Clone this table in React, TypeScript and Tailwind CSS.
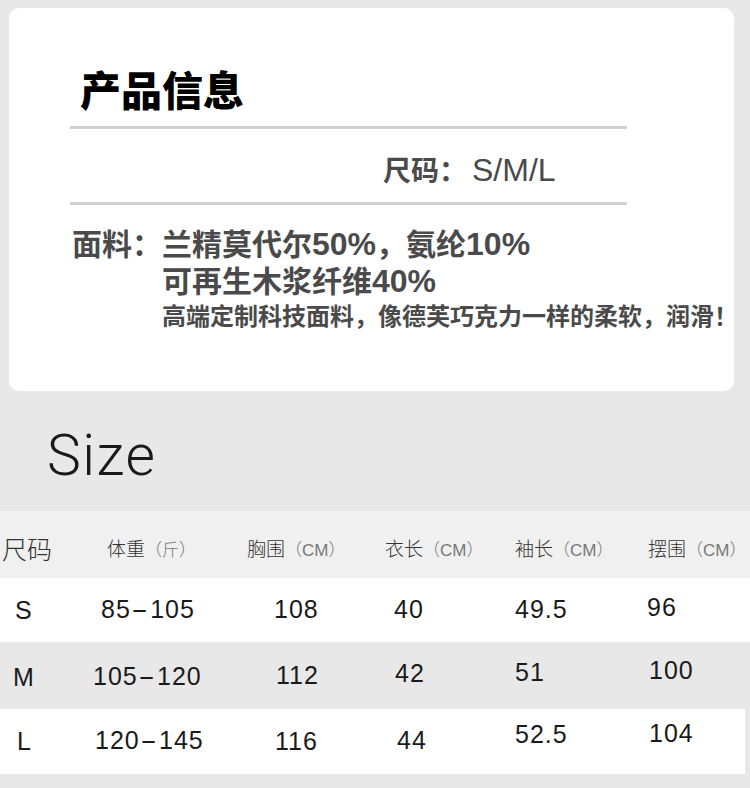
const FONT = "font-['Liberation_Sans','Noto_Sans_CJK_SC',sans-serif]";

type Cell = { text: string; cls: string };

const COLS = ['w-[92px]', 'w-[153px]', 'w-[135px]', 'w-[130px]', 'w-[135px]', 'w-[105px]'];

const HEADER = [
  { label: '尺码', unit: '', cls: 'pl-[2px] text-[25px]' },
  { label: '体重', unit: '（斤）', cls: 'pl-[15px] text-[19px]' },
  { label: '胸围', unit: '（CM）', cls: 'pl-[2px] text-[19px]' },
  { label: '衣长', unit: '（CM）', cls: 'pl-[5px] text-[19px]' },
  { label: '袖长', unit: '（CM）', cls: 'pl-[5px] text-[19px]' },
  { label: '摆围', unit: '（CM）', cls: 'pl-[3px] text-[19px]' },
];

const ROWS: { bg: string; cells: Cell[] }[] = [
  {
    bg: 'h-[64px] bg-white',
    cells: [
      { text: 'S', cls: 'pl-[15px]' },
      { text: '85-105', cls: 'pl-[9px] -translate-y-[1px]' },
      { text: '108', cls: 'pl-[29px] -translate-y-[1px]' },
      { text: '40', cls: 'pl-[14px] -translate-y-[1px]' },
      { text: '49.5', cls: 'pl-[5px] -translate-y-[1px]' },
      { text: '96', cls: 'pl-[2px] -translate-y-[3px]' },
    ],
  },
  {
    bg: 'h-[67px] bg-[#e8e8e8]',
    cells: [
      { text: 'M', cls: 'pl-[13px] translate-y-[2px]' },
      { text: '105-120', cls: 'pl-[1px] translate-y-[1px]' },
      { text: '112', cls: 'pl-[31px]' },
      { text: '42', cls: 'pl-[15px] -translate-y-[2px]' },
      { text: '51', cls: 'pl-[5px] -translate-y-[3px]' },
      { text: '100', cls: 'pl-[4px] -translate-y-[5px]' },
    ],
  },
  {
    bg: 'h-[65px] w-[745px] bg-white',
    cells: [
      { text: 'L', cls: 'pl-[17px]' },
      { text: '120-145', cls: 'pl-[3px] -translate-y-[1px]' },
      { text: '116', cls: 'pl-[30px]' },
      { text: '44', cls: 'pl-[17px] -translate-y-[1px]' },
      { text: '52.5', cls: 'pl-[5px] -translate-y-[7px]' },
      { text: '104', cls: 'pl-[4px] -translate-y-[8px]' },
    ],
  },
];

// the dash in the ranges is drawn longer than a plain hyphen
function Range({ text }: { text: string }) {
  const parts = text.split('-');
  if (parts.length < 2) return <>{text}</>;
  return (
    <>
      {parts[0]}
      <span className="inline-block px-[5px]">
        <span className="inline-block scale-x-[2]">-</span>
      </span>
      {parts[1]}
    </>
  );
}

function InfoCard() {
  return (
    <div className="ml-[9px] h-[383px] w-[725px] rounded-[10px] bg-white pl-[61px] pt-[64px] whitespace-nowrap">
      <h1 className="pl-[10px] text-[41px] font-black leading-[40px] text-black">产品信息</h1>
      <div className="mt-[14px] h-[3px] w-[557px] bg-[#d0d0d0]" />
      <p className="mt-[27px] pl-[313px] text-[28px] font-bold leading-[28px] text-[#4a4a4a]">
        尺码：<span className="ml-[5px] text-[32px] font-normal">S/M/L</span>
      </p>
      <div className="mt-[16px] h-[3px] w-[557px] bg-[#d0d0d0]" />
      <div className="mt-[21px] flex pl-[2px] font-bold text-[#4a4a4a]">
        <span className="w-[90px] shrink-0 text-[30px] leading-[37px]">面料：</span>
        <div className="shrink-0">
          <p className="text-[30px] leading-[37px]">
            兰精莫代尔<span className="text-[32px] leading-[30px]">50%</span>，氨纶
            <span className="text-[32px] leading-[30px]">10%</span>
          </p>
          <p className="text-[30px] leading-[37px]">
            可再生木浆纤维<span className="text-[32px] leading-[30px]">40%</span>
          </p>
          <p className="mt-[5px] text-[24px] leading-[23px]">
            高端定制科技面料，像德芙巧克力一样的柔软，润滑！
          </p>
        </div>
      </div>
    </div>
  );
}

function SizeTable() {
  return (
    <div>
      <div className="flex h-[67px] items-center bg-[#f0f0f0] pt-[12px] font-light text-[#333]">
        {HEADER.map((h, i) => (
          <div key={h.label} className={`${COLS[i]} shrink-0 whitespace-nowrap ${h.cls}`}>
            {h.label}
            {h.unit && <span className="text-[17px] text-[#777]">{h.unit}</span>}
          </div>
        ))}
      </div>
      {ROWS.map((row, r) => (
        <div key={r} className={`flex items-center ${row.bg}`}>
          {row.cells.map((c, i) => (
            <div
              key={i}
              className={`${COLS[i]} shrink-0 whitespace-nowrap text-[25px] leading-none tracking-[1px] text-[#1a1a1a] ${c.cls}`}
            >
              <Range text={c.text} />
            </div>
          ))}
        </div>
      ))}
      <div className="h-[14px]" />
    </div>
  );
}

export default function App() {
  return (
    <div className={`h-[788px] w-[750px] overflow-hidden bg-[#e8e8e8] pt-[8px] ${FONT}`}>
      <InfoCard />
      <div className="h-[120px] pl-[47px] pt-[36px]">
        <h2 className="font-['Roboto',sans-serif] text-[57px] font-light leading-[57px] tracking-[1.5px] text-[#1a1a1a]">
          Size
        </h2>
      </div>
      <SizeTable />
    </div>
  );
}
